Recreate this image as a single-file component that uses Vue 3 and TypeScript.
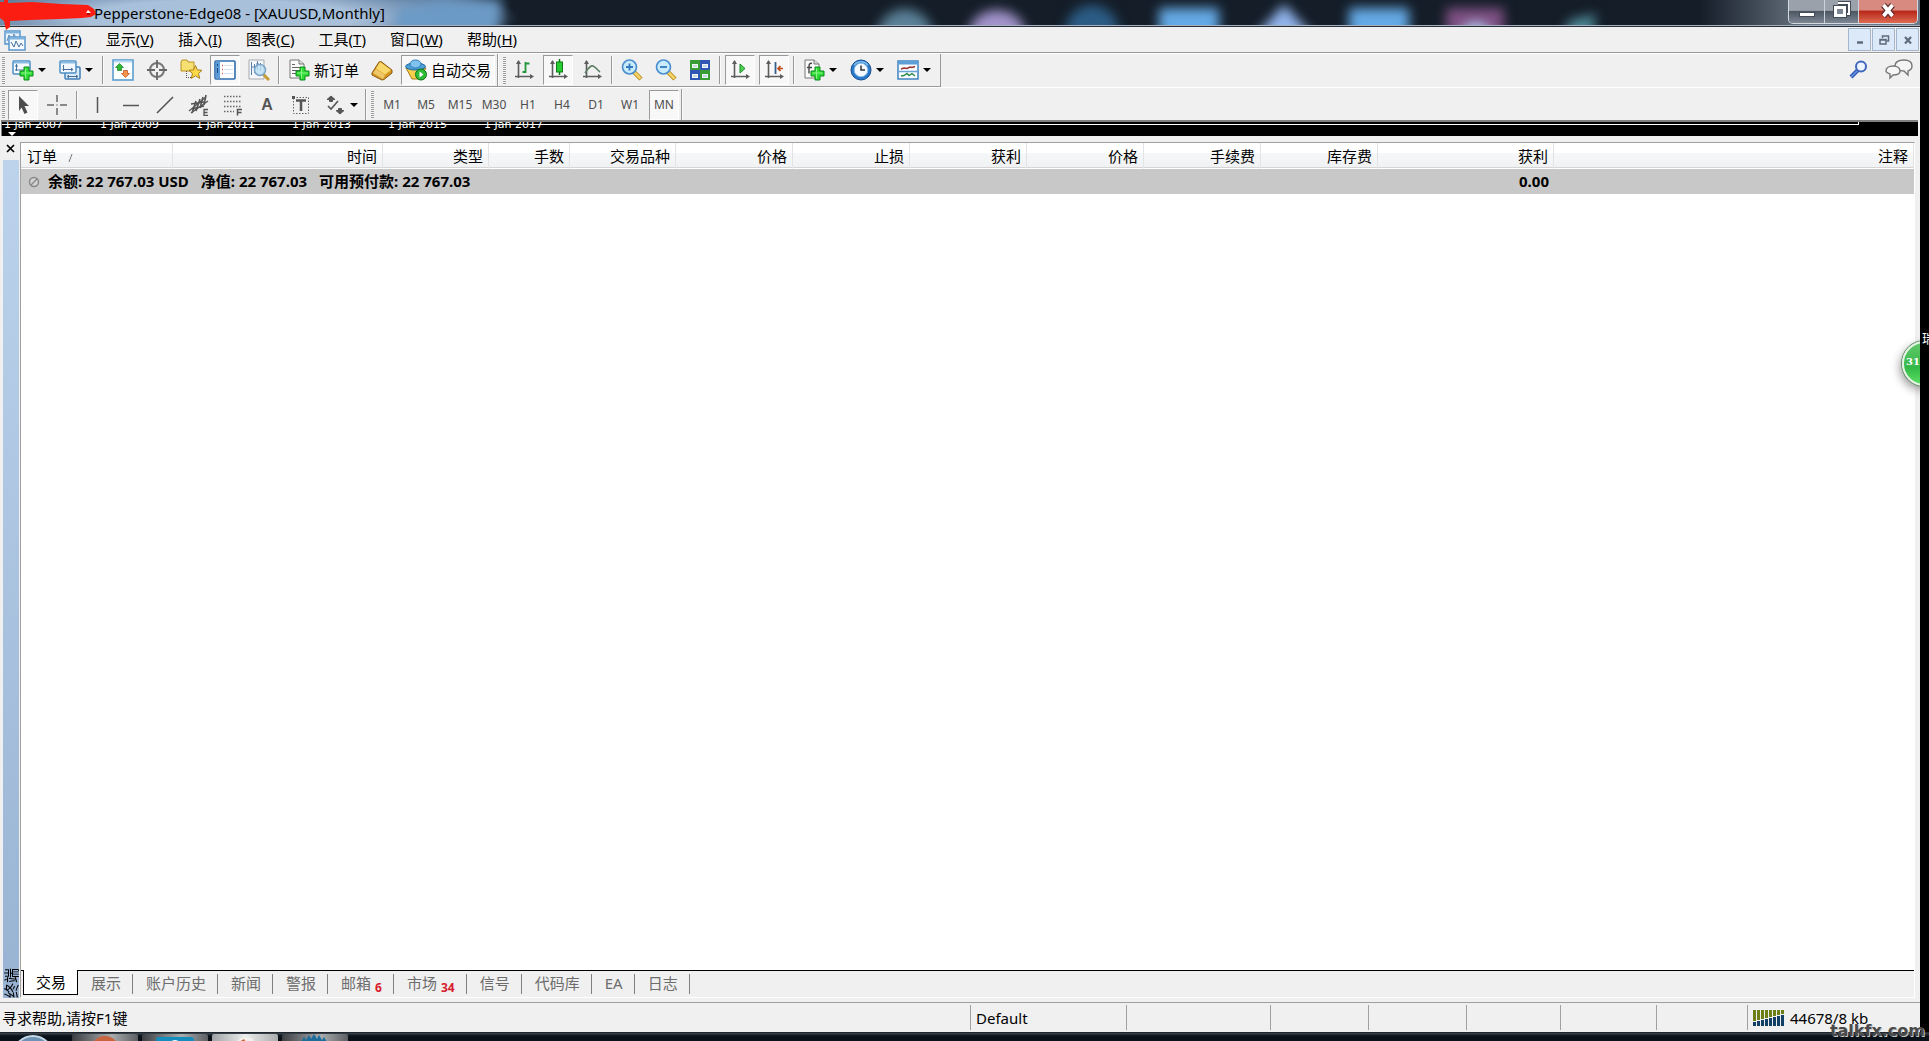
<script setup lang="ts">
interface Tool {
  id: string
  label: string
  text?: string
  drop?: boolean
  pressed?: boolean
  sep?: boolean
}

const plus =
  '<path d="M12 8h5v4h4v5h-4v4h-5v-4H8v-5h4z" fill="#2fdc35" stroke="#0b8a1b"/><path d="M13.500 9.500v10M9.500 14h10" stroke="#8cf58a" stroke-width="1"/>'
const axes =
  '<path d="M5.500 2v17M2 17.500h17" stroke="#5d5d5d" stroke-width="1.600" fill="none"/><path d="M3 5l2.500-4L8 5zM17 15l4 2.500-4 2.500z" fill="#5d5d5d"/>'
const magnifier =
  '<path d="M13 13l7 7" stroke="#b98a1c" stroke-width="4.500"/><path d="M13.500 13.500l6 6" stroke="#f6d568" stroke-width="2.500"/><circle cx="8.500" cy="8" r="7" fill="#c9ecfb" stroke="#4c8fd0" stroke-width="1.700"/>'

const icons: Record<string, string> = {
  newChart:
    '<rect x="1" y="2" width="17" height="13" rx="1" fill="#f4faff" stroke="#4d8fc4" stroke-width="1.500"/><path d="M2 3.500h15" stroke="#8bbce4" stroke-width="2"/><path d="M4.500 5v7M3 7h3M3 11h9" stroke="#476f96" fill="none"/>' + plus,
  profiles:
    '<rect x="6" y="8" width="15" height="12" rx="1" fill="#dcecfa" stroke="#3f7fb8" stroke-width="1.500"/><path d="M9 17.500h9M10 16l-2 1.500 2 1.500M17 16l2 1.500-2 1.500" stroke="#476f96" fill="none"/><rect x="1" y="2" width="16" height="12" rx="1" fill="#f2f8fe" stroke="#4d8fc4" stroke-width="1.500"/><path d="M2 3.500h14" stroke="#8bbce4" stroke-width="2"/><path d="M4.500 6v6M3.500 10.500h10M12 9l2 1.500-2 1.500" stroke="#476f96" fill="none"/>',
  market:
    '<rect x="1" y="1" width="20" height="20" fill="#fbfdff" stroke="#5c9ed0" stroke-width="1.600"/><path d="M2 2.500h18" stroke="#b8daf2" stroke-width="2"/><path d="M7.500 4.500l4 4H9.500v3h-4v-3h-2z" fill="#31b733" stroke="#12801c" stroke-width=".7"/><path d="M13.500 18.500l-4-4h2v-3h4v3h2z" fill="#f4934a" stroke="#bf4a16" stroke-width=".7"/>',
  navigator:
    '<circle cx="11" cy="11" r="7" fill="none" stroke="#777" stroke-width="2"/><path d="M11 1v8M11 13v8M1 11h8M13 11h8" stroke="#666" stroke-width="1.800"/>',
  favorites:
    '<path d="M1 3l1-2h5l1 2h6v9H1z" fill="#f7e072" stroke="#bb9220"/><path d="M6.500 12v8M8 18.500h4" stroke="#555" stroke-dasharray="1 1"/><path d="M15.500 6.500l1.900 4.400 4.600.4-3.500 3.200 1.200 4.900-4.200-2.600-4.200 2.600 1.200-4.900L9 11.300l4.600-.4z" fill="#fbd94b" stroke="#a9801b"/>',
  terminal:
    '<rect x="1" y="2" width="20" height="18" rx="1" fill="#fff" stroke="#2d6eb0" stroke-width="1.600"/><rect x="2" y="3" width="4" height="16" fill="#5b9bd8"/><path d="M3.500 5v2M3.500 9v5" stroke="#16487e"/><path d="M8 6.500h1M8 10.500h1M8 14.500h1" stroke="#d05b50" stroke-width="1.500"/><path d="M10 6.500h9M10 10.500h9M10 14.500h9" stroke="#d5e4f3"/>',
  tester:
    '<path d="M1 1h15v19H1z" fill="#f5f7fa" stroke="#a5a9b0"/><path d="M3.500 3v13M6.500 5v9M9.500 2v9M12.500 4v8M3 8h3M8 5h3" stroke="#5b80aa"/><path d="M15 15l6 6" stroke="#c79c33" stroke-width="3"/><circle cx="12" cy="11" r="5.500" fill="#b9def5" fill-opacity=".8" stroke="#7ba3c8" stroke-width="1.500"/>',
  order:
    '<path d="M2 1h9l5 4v14H2z" fill="#fbfbfb" stroke="#777"/><path d="M11 1v4h5" fill="#ddd" stroke="#777"/><path d="M4 5.500h3M4 8.500h8M4 11.500h8M4 14.500h5" stroke="#666"/>' + plus,
  gold:
    '<path d="M1 14L8 3l2-.5L21 11v3l-8 6.500-2 .5L1 16z" fill="#d7981f" stroke="#8b5a12"/><path d="M5 9.500L9 3l11 8-6 4.500z" fill="#f8d86b"/><path d="M2 14l3-4 9 6-2 4z" fill="#fbe79d" opacity=".6"/>',
  auto:
    '<path d="M1 9l6 11h7l7-11z" fill="#f5cf4c" stroke="#a57b17"/><ellipse cx="10.500" cy="7.500" rx="10" ry="3.500" fill="#4d9fd8" stroke="#22699f"/><ellipse cx="10.500" cy="5" rx="5.500" ry="4" fill="#7fc3ee" stroke="#2c78b0"/><circle cx="16" cy="15.500" r="5.500" fill="#2fbd36" stroke="#0d7419"/><path d="M14.500 12.500l4 3-4 3z" fill="#fff"/>',
  bars: axes + '<path d="M12.500 3v11M12.500 4.500h4M9.500 13h3" stroke="#21963a" stroke-width="1.800" fill="none"/>',
  candles: axes + '<path d="M12.500 0v16" stroke="#0b7a16" stroke-width="1.500"/><rect x="9.500" y="3" width="6" height="10" fill="#27cc31" stroke="#0b7a16"/>',
  line: axes + '<path d="M4 14c3-4 5-8 8-7s4 4 7 6" stroke="#5b7d60" stroke-width="1.600" fill="none"/>',
  zoomIn: magnifier + '<path d="M5 8h7M8.500 4.500v7" stroke="#3579bd" stroke-width="1.800"/>',
  zoomOut: magnifier + '<path d="M5 8h7" stroke="#3579bd" stroke-width="1.800"/>',
  tile:
    '<path d="M1 1h10v10H1zM11 11h10v10H11z" fill="#3a9c34"/><path d="M11 1h10v10H11zM1 11h10v10H1z" fill="#2f55b5"/><path d="M3 5h6v4H3zM3 15h6v4H3z" fill="#eef8ee"/><path d="M13 5h6v4h-6zM13 15h6v4h-6z" fill="#eaf2fc"/><path d="M4 7h4M14 7h4M4 17h4M14 17h4" stroke="#9fc0c8"/>',
  scroll: axes + '<path d="M11 5l5 4.500-5 4.500z" fill="#50d14e" stroke="#168b27"/>',
  shift: axes + '<path d="M12.500 3v12" stroke="#35608c" stroke-width="1.800"/><path d="M20 9.500h-5M17.500 7l-2.500 2.500 2.500 2.500" stroke="#c04a18" stroke-width="1.700" fill="none"/>',
  indicators:
    '<path d="M2 1h9l5 4v14H2z" fill="#fbfbfb" stroke="#777"/><path d="M11 1v4h5" fill="#ddd" stroke="#777"/><path d="M9 4.500c-3-1-3 2-3 4v6M4 8.500h5" stroke="#444" stroke-width="1.400" fill="none"/>' + plus,
  clock:
    '<circle cx="11" cy="11" r="10" fill="#2a78c9" stroke="#164f94"/><circle cx="11" cy="11" r="6.800" fill="#f3f9ff" stroke="#86bbea"/><path d="M11 6.500V11h4" stroke="#333" stroke-width="1.500" fill="none"/><path d="M4 6a9 9 0 0 1 14 0" stroke="#7dbcf0" stroke-width="1.500" fill="none"/>',
  template:
    '<rect x="1" y="2" width="20" height="18" fill="#f8fcff" stroke="#3f83c0" stroke-width="1.500"/><path d="M1.500 4h19" stroke="#5d9ed6" stroke-width="3"/><path d="M1 12.500h20" stroke="#6ba4d4" stroke-width="1.500"/><path d="M4 10l3-1 3 .5L13 8l2 .5 3-1" stroke="#9c3030" stroke-width="1.400" fill="none"/><path d="M4 17l3-.5 3-2 2 2 3-2 3 2.500" stroke="#2f8a46" stroke-width="1.400" fill="none"/>',
  cursor: '<path d="M7 2l10 10h-4.500l3 6.500-3 1.500-3-6.500L7 17z" fill="#4d4d4d"/>',
  cross: '<path d="M11 1v7M11 14v7M1 11h7M14 11h7M10.500 11h1" stroke="#666" stroke-width="1.500"/>',
  vline: '<path d="M11.500 3v16" stroke="#555" stroke-width="1.500"/>',
  hline: '<path d="M3 11.500h16" stroke="#555" stroke-width="1.500"/>',
  trend: '<path d="M3 19L19 3" stroke="#555" stroke-width="1.600"/>',
  channel:
    '<path d="M1 17L18 3M3 19L20 7M3 10l13-2M4 15l12-3" stroke="#555" stroke-width="1.300"/><path d="M4 19L8 7M8 17l4-12M12 14l3-11M16 11l2-10" stroke="#555" stroke-width="1.600"/><path d="M20 15.500h-4v6h4M16 18.500h3.500" stroke="#555" stroke-width="1.300" fill="none"/>',
  fibo:
    '<path d="M2 2.500h18M2 7.500h18M2 12.500h18M2 17.500h10" stroke="#666" stroke-width="1.400" stroke-dasharray="1.500 1.500"/><path d="M20 15.500h-4.500v6M15.500 18.500h4" stroke="#555" stroke-width="1.500" fill="none"/>',
  label:
    '<rect x="3.500" y="3.500" width="15" height="16" fill="none" stroke="#666" stroke-dasharray="1.500 1.500"/><path d="M6 6.500h10M11 6.500V17" stroke="#555" stroke-width="2.500"/><path d="M2 2h3v3H2z" fill="#555"/>',
  shapes:
    '<path d="M7 2l4 3.500H8.500v2h-3v-2H3zM16 20l-4-3.500h2.500v-2h3v2H20z" fill="#555" stroke="#555"/><path d="M4 12l3 3 7-8" stroke="#555" stroke-width="1.600" fill="none"/>',
}

const standard: Tool[] = [
  { id: 'newChart', label: '新图表', drop: true },
  { id: 'profiles', label: '配置文件', drop: true, sep: true },
  { id: 'market', label: '市场报价' },
  { id: 'navigator', label: '数据窗口' },
  { id: 'favorites', label: '导航' },
  { id: 'terminal', label: '终端', pressed: true },
  { id: 'tester', label: '策略测试', sep: true },
  { id: 'order', label: '新订单', text: '新订单' },
  { id: 'gold', label: '编辑器' },
  { id: 'auto', label: '自动交易', text: '自动交易', pressed: true },
]
const charts: Tool[] = [
  { id: 'bars', label: '柱状图' },
  { id: 'candles', label: '阴阳烛', pressed: true },
  { id: 'line', label: '折线图', sep: true },
  { id: 'zoomIn', label: '放大' },
  { id: 'zoomOut', label: '缩小' },
  { id: 'tile', label: '平铺', sep: true },
  { id: 'scroll', label: '自动滚动', pressed: true },
  { id: 'shift', label: '图表平移', pressed: true, sep: true },
  { id: 'indicators', label: '指标', drop: true },
  { id: 'clock', label: '周期', drop: true },
  { id: 'template', label: '模板', drop: true },
]
const drawing: Tool[] = [
  { id: 'cursor', label: '光标', pressed: true },
  { id: 'cross', label: '十字准线', sep: true },
  { id: 'vline', label: '垂直线' },
  { id: 'hline', label: '水平线' },
  { id: 'trend', label: '趋势线' },
  { id: 'channel', label: '通道' },
  { id: 'fibo', label: '斐波那契' },
  { id: 'letter', label: '文字' },
  { id: 'label', label: '文字标签' },
  { id: 'shapes', label: '箭头', drop: true },
]
const bands = [
  [standard, charts],
  [drawing],
]
const frames = ['M1', 'M5', 'M15', 'M30', 'H1', 'H4', 'D1', 'W1', 'MN']

const menus = [
  ['文件', 'F'], ['显示', 'V'], ['插入', 'I'], ['图表', 'C'],
  ['工具', 'T'], ['窗口', 'W'], ['帮助', 'H'],
]
const dates = [2007, 2009, 2011, 2013, 2015, 2017].map((y) => `1 Jan ${y}`)

const columns: { name: string; width?: number }[] = [
  { name: '订单', width: 152 }, { name: '时间', width: 210 }, { name: '类型', width: 106 },
  { name: '手数', width: 81 }, { name: '交易品种', width: 106 }, { name: '价格', width: 117 },
  { name: '止损', width: 117 }, { name: '获利', width: 117 }, { name: '价格', width: 117 },
  { name: '手续费', width: 117 }, { name: '库存费', width: 117 }, { name: '获利', width: 176 },
  { name: '注释' },
]
const account = ['余额: 22 767.03 USD', '净值: 22 767.03', '可用预付款: 22 767.03']
const tabs: { name: string; count?: number; active?: boolean }[] = [
  { name: '交易', active: true }, { name: '展示' }, { name: '账户历史' }, { name: '新闻' },
  { name: '警报' }, { name: '邮箱', count: 6 }, { name: '市场', count: 34 }, { name: '信号' },
  { name: '代码库' }, { name: 'EA' }, { name: '日志' },
]
const cells = [144, 98, 98, 94, 96, 91]
</script>

<template>
  <div class="desktop">
    <div class="upper">
      <main class="window">
        <header class="titlebar">
          <div class="glass" aria-hidden="true">
            <svg width="1700" height="50" viewBox="0 0 1700 50">
              <path d="M395 44V8l30-4 22-8h54v24l-10 24z" fill="#6c9ac6" />
              <circle cx="905" cy="37" r="28" fill="#5b8298" />
              <ellipse cx="997" cy="34" rx="28" ry="24" fill="#a394cc" />
              <circle cx="1092" cy="32" r="27" fill="#2c5c85" />
              <rect x="1159" y="8" width="60" height="40" fill="#65aae6" />
              <path d="M1248 44l36-40 36 40z" fill="#92b5ee" />
              <rect x="1349" y="8" width="60" height="40" fill="#65aae6" />
              <rect x="1446" y="8" width="58" height="40" fill="#7e5082" />
              <circle cx="1476" cy="38" r="16" fill="#b0c6ee" />
              <path d="M1560 40l10-20 26-6-4 26z" fill="#4f8a98" />
            </svg>
          </div>
          <svg class="scribble" width="98" height="30" viewBox="0 0 98 30" aria-hidden="true">
            <path d="M0 2h4V0h4v3l24-1 30 2 26 1 6 4 2 5-5 3-9 1-22 1-30 1-20 1v6l-4 3-2-9-4-3z" fill="#fb1d12" />
            <path d="M86 13l2-3 3 3z" fill="#fff" /><path d="M87 14h3" stroke="#600" />
          </svg>
          <h1>Pepperstone-Edge08 - [XAUUSD,Monthly]</h1>
          <div class="caption-buttons">
            <button type="button" class="min" aria-label="最小化">
              <svg width="18" height="20" viewBox="0 0 18 20"><rect x="1.500" y="12.500" width="15" height="4" fill="#fff" stroke="#444c58" /></svg>
            </button>
            <button type="button" class="restore" aria-label="还原">
              <svg width="20" height="20" viewBox="0 0 20 20">
                <path d="M6 3h11v11h-3" fill="none" stroke="#444c58" stroke-width="4" /><path d="M6 3h11v11h-3" fill="none" stroke="#fff" stroke-width="2" />
                <rect x="3.500" y="7.500" width="9" height="8" fill="none" stroke="#444c58" stroke-width="5" /><rect x="3.500" y="7.500" width="9" height="8" fill="#7c8591" stroke="#fff" stroke-width="3" />
              </svg>
            </button>
            <button type="button" class="close" aria-label="关闭">
              <svg width="20" height="20" viewBox="0 0 20 20"><path d="M5.500 5l9 11M14.500 5l-9 11" stroke="#5b2a2a" stroke-width="6" /><path d="M5.500 5l9 11M14.500 5l-9 11" stroke="#fff" stroke-width="3.600" /></svg>
            </button>
          </div>
        </header>

        <nav class="menubar">
          <svg class="app-icon" width="22" height="22" viewBox="0 0 22 22" aria-hidden="true">
            <rect x="1" y="2" width="15" height="13" fill="#e8f3fc" stroke="#5796cb" stroke-width="1.500" /><path d="M1 3.500h15" stroke="#7eb2df" stroke-width="2" />
            <path d="M3 12l2-6 3 5 2-6 2 4" stroke="#6c8cab" fill="none" />
            <rect x="5" y="8" width="16" height="13" fill="#f5faff" stroke="#5796cb" stroke-width="1.500" /><path d="M5 9.500h16" stroke="#7eb2df" stroke-width="2" />
            <path d="M7 13l3 5 2-6 3 6 2-4 2 3" stroke="#44709b" fill="none" />
          </svg>
          <button v-for="m in menus" :key="m[1]" type="button" class="menu">{{ m[0] }}(<u>{{ m[1] }}</u>)</button>
          <div class="mdi">
            <button type="button" aria-label="最小化图表"><svg width="12" height="12" viewBox="0 0 12 12"><path d="M3 8.500h6" stroke="#5f6b7a" stroke-width="2.500" /></svg></button>
            <button type="button" aria-label="还原图表"><svg width="12" height="12" viewBox="0 0 12 12"><path d="M4.500 4V2h6v5h-2M4 2h7" stroke="#5f6b7a" stroke-width="1.500" fill="none" /><path d="M2 5.500h6v4.500H2zM2 6h6" stroke="#5f6b7a" stroke-width="1.500" fill="none" /></svg></button>
            <button type="button" aria-label="关闭图表"><svg width="12" height="12" viewBox="0 0 12 12"><path d="M3 3l6 6.500M9 3L3 9.500" stroke="#5f6b7a" stroke-width="2.200" /></svg></button>
          </div>
        </nav>

        <div v-for="(band, b) in bands" :key="b" class="band" :class="{ last: b === 1 }">
          <div class="bar" :class="{ outlined: b === 0 }">
            <template v-for="(group, g) in band" :key="g">
              <span class="grip"></span>
              <template v-for="t in group" :key="t.id">
                <button type="button" class="tool" :class="{ pressed: t.pressed, drop: t.drop, wide: t.text }" :aria-label="t.label">
                  <b v-if="t.id === 'letter'" class="letter">A</b>
                  <svg v-else width="22" height="22" viewBox="0 0 22 22" v-html="icons[t.id]"></svg>
                  <span v-if="t.text">{{ t.text }}</span>
                  <i v-if="t.drop" class="arrow"></i>
                </button>
                <span v-if="t.sep" class="sep"></span>
              </template>
              <span v-if="g < band.length - 1 || b === 1" class="edge"></span>
            </template>
            <template v-if="b === 1">
              <span class="grip"></span>
              <button v-for="f in frames" :key="f" type="button" class="tool frame" :class="{ pressed: f === 'MN' }">{{ f }}</button>
              <span class="edge"></span>
            </template>
          </div>
          <div v-if="b === 0" class="right-tools">
            <button type="button" aria-label="搜索">
              <svg width="20" height="20" viewBox="0 0 20 20"><path d="M9 11l-7 7" stroke="#2c56b4" stroke-width="4" /><path d="M9 11l-7 7" stroke="#6d98e6" stroke-width="1.500" /><circle cx="12" cy="7.500" r="5" fill="#eef5ff" stroke="#4166be" stroke-width="2" /></svg>
            </button>
            <button type="button" aria-label="聊天">
              <svg width="28" height="22" viewBox="0 0 28 22"><path d="M19 2c5 0 8 2 8 6 0 3-1 4-4 5v4l-4-4c-5 0-9-1-9-5s4-6 9-6z" fill="#f4f4f4" stroke="#777" stroke-width="1.400" /><path d="M8 8c4 0 7 2 7 5s-3 4-7 4l-3 3v-4c-3-1-4-2-4-3 0-3 3-5 7-5z" fill="#f7f7f7" stroke="#777" stroke-width="1.400" /></svg>
            </button>
          </div>
        </div>

        <section class="chart" aria-label="图表">
          <div class="axis"></div>
          <div class="dates"><span v-for="d in dates" :key="d">{{ d }}</span></div>
          <i class="marker"></i>
        </section>

        <section class="terminal">
          <aside class="side">
            <button type="button" class="side-close" aria-label="关闭终端"><svg width="9" height="9" viewBox="0 0 9 9"><path d="M1 1l7 7M8 1L1 8" stroke="#000" stroke-width="1.700" /></svg></button>
            <div class="side-title"><span>终端</span></div>
          </aside>
          <div class="panel">
            <div class="list">
              <table>
                <colgroup><col v-for="(c, i) in columns" :key="i" :style="c.width ? { width: c.width + 'px' } : undefined" /></colgroup>
                <thead>
                  <tr><th v-for="(c, i) in columns" :key="i" scope="col">{{ c.name }}<svg v-if="i === 0" class="sort" width="6" height="8" viewBox="0 0 6 8" aria-hidden="true"><path d="M1 8L4 0" stroke="#777" /></svg></th></tr>
                </thead>
                <tbody>
                  <tr>
                    <td colspan="11" class="balance"><svg width="12" height="12" viewBox="0 0 12 12" aria-hidden="true"><circle cx="6" cy="6" r="4.500" fill="#d2d2d2" stroke="#888" stroke-width="1.500" /><path d="M3 9l6-6" stroke="#888" stroke-width="1.300" /></svg><span v-for="a in account" :key="a">{{ a }}</span></td>
                    <td>0.00</td>
                    <td></td>
                  </tr>
                </tbody>
              </table>
            </div>
            <div class="tabs" role="tablist">
              <button v-for="t in tabs" :key="t.name" type="button" role="tab" :aria-selected="!!t.active" :class="{ active: t.active }">{{ t.name }}<sub v-if="t.count">{{ t.count }}</sub></button>
            </div>
          </div>
        </section>

        <footer class="status">
          <span class="help">寻求帮助,请按F1键</span>
          <span class="cell profile">Default</span>
          <span v-for="(w, i) in cells" :key="i" class="cell" :style="{ width: w + 'px' }"></span>
          <span class="cell traffic">
            <svg width="32" height="16" viewBox="0 0 32 16" aria-hidden="true">
              <g v-for="n in 8" :key="n">
                <rect :x="(n - 1) * 4" y="0" width="3" :height="12 - n" fill="#6b7f14" />
                <rect :x="(n - 1) * 4" :y="13 - n" width="3" :height="3 + n" fill="#123f66" />
              </g>
            </svg>
            44678/8 kb
          </span>
        </footer>

        <div class="badge"><span>31</span></div>
      </main>
      <div class="strip">瑞</div>
    </div>

    <div class="taskbar">
      <svg width="360" height="9" viewBox="0 0 360 9" aria-hidden="true">
        <defs>
          <linearGradient id="task" x1="0" x2="1"><stop offset="0" stop-color="#3b3f43" /><stop offset=".6" stop-color="#a9acae" /><stop offset="1" stop-color="#5b5f63" /></linearGradient>
          <linearGradient id="lit" x1="0" x2="1"><stop offset="0" stop-color="#9fa3a5" /><stop offset=".5" stop-color="#eceded" /><stop offset="1" stop-color="#a9acad" /></linearGradient>
        </defs>
        <circle cx="33" cy="23" r="20" fill="#6f93b3" stroke="#c7d8e6" stroke-width="2" />
        <rect x="72" y="1" width="66" height="12" rx="2" fill="url(#task)" /><rect x="142" y="1" width="66" height="12" rx="2" fill="url(#task)" />
        <rect x="212" y="1" width="66" height="12" rx="2" fill="url(#lit)" /><rect x="282" y="1" width="66" height="12" rx="2" fill="url(#task)" />
        <circle cx="105" cy="17" r="14" fill="#c9653f" /><circle cx="109" cy="15" r="7" fill="#a3482c" />
        <rect x="156" y="4" width="38" height="10" rx="3" fill="#158dbd" /><circle cx="175" cy="13" r="6" fill="#e8f6fb" />
        <circle cx="246" cy="15" r="11" fill="#f4f1ec" /><path d="M239 9l5-3 2 3z" fill="#c9683c" />
        <path d="M301 9l3-5 2 3 3-5 2 4 3-5 3 5 2-4 3 5 2-3 3 5z" fill="#1d6d9c" />
      </svg>
    </div>
    <div class="watermark">talkfx.com</div>
  </div>
</template>

<style>
body {
  margin: 0;
  background: #000;
}
</style>

<style scoped>
.desktop {
  position: relative;
  display: flex;
  flex-direction: column;
  min-height: 100vh;
  overflow: hidden;
  background: #000;
  color: #000;
  font: 15px/20px "Noto Sans", "Noto Sans CJK SC", sans-serif;
}
.desktop * {
  box-sizing: border-box;
}
button {
  padding: 0;
  border: 0;
  background: none;
  color: inherit;
  font: inherit;
}
svg {
  display: block;
  flex: none;
}
.upper {
  flex: 1;
  display: flex;
}
.window {
  position: relative;
  flex: 1;
  min-width: 0;
  display: flex;
  flex-direction: column;
  overflow: hidden;
  background: #f0f0f0;
}
.strip {
  width: 9px;
  padding: 328px 0 0 2px;
  overflow: hidden;
  white-space: nowrap;
  background: #000;
  color: #fff;
  font-size: 13px;
}

/* title bar: translucent glass with desktop icons glowing through */
.titlebar {
  position: relative;
  display: flex;
  align-items: flex-start;
  height: 27px;
  border-bottom: 1px solid #27303c;
  box-shadow: inset 0 -1px #a7b1bd;
  background:
    linear-gradient(90deg, transparent calc(100% - 220px), #6b7684 calc(100% - 110px)),
    radial-gradient(ellipse 300px 40px at 220px 18px, #a9c0da 0 45%, #6d8bac 75%, transparent),
    linear-gradient(90deg, #4b6177 0, #53708f 450px, #141d28 510px);
}
.glass {
  position: absolute;
  top: 0;
  left: 0;
  right: 0;
  height: 25px;
  overflow: hidden;
}
.glass svg {
  filter: blur(6px);
}
.scribble {
  position: relative;
  margin-right: -4px;
}
h1 {
  position: relative;
  flex: 1;
  margin: 3px 0 0;
  font-size: 15px;
  font-weight: 400;
  line-height: 20px;
  white-space: nowrap;
}
.caption-buttons {
  position: relative;
  display: flex;
  height: 24px;
  margin-right: 2px;
  border: 1px solid #d4d9e0;
  border-top: 0;
  border-radius: 0 0 5px 5px;
  overflow: hidden;
}
.caption-buttons button {
  display: flex;
  justify-content: center;
  width: 34px;
  border-right: 1px solid #ccd2da;
  background: linear-gradient(#9aa1ab 0 45%, #4d5663 50%, #7d8793);
}
.caption-buttons .min {
  width: 36px;
}
.caption-buttons .close {
  width: 58px;
  border-right: 0;
  background: linear-gradient(#d88a80 0 42%, #b8291a 50%, #de6a52);
}

/* menu */
.menubar {
  display: flex;
  align-items: center;
  height: 26px;
  padding-left: 4px;
  border-bottom: 1px solid #999;
}
.app-icon {
  margin-right: 9px;
}
.menu {
  margin-right: 24px;
  padding-bottom: 1px;
  white-space: nowrap;
}
.mdi {
  display: flex;
  gap: 1px;
  margin-left: auto;
  padding-right: 1px;
}
.mdi button {
  display: flex;
  align-items: center;
  justify-content: center;
  width: 23px;
  height: 23px;
  border: 1px solid #a3b6cb;
  background: #dbe9f8;
}

/* toolbars */
.band {
  display: flex;
  align-items: flex-start;
  justify-content: space-between;
  height: 34px;
  border-top: 1px solid #fff;
}
.band.last {
  height: 33px;
}
.bar {
  display: flex;
  align-items: center;
  gap: 4px;
  height: 33px;
  padding: 1px 2px;
}
.bar.outlined {
  padding-right: 4px;
  border-right: 1px solid #999;
  border-bottom: 1px solid #999;
}
.grip {
  width: 3px;
  height: 27px;
  margin-right: -1px;
  background: repeating-linear-gradient(#9a9a9a 0 1px, #f8f8f8 1px 2px);
}
.sep,
.edge {
  width: 2px;
  height: 28px;
  border-left: 1px solid #999;
  border-right: 1px solid #fafafa;
}
.edge {
  height: 32px;
  margin-left: -2px;
}
.tool {
  display: flex;
  align-items: center;
  width: 30px;
  height: 30px;
  padding: 0 3px;
  border: 1px solid transparent;
}
.tool.drop {
  width: 43px;
}
.tool.wide {
  width: auto;
  gap: 4px;
  white-space: nowrap;
}
.tool.pressed {
  border-color: #9a9a9a #fff #fff #9a9a9a;
  background: #f8f8f8;
}
.tool.frame {
  justify-content: center;
  padding: 0;
  color: #4e4e4e;
  font-size: 12px;
}
.letter {
  width: 22px;
  color: #555;
  font: bold 16px/20px "Liberation Sans", sans-serif;
  text-align: center;
}
.arrow {
  margin-left: 4px;
  border: 4px solid transparent;
  border-top-color: #000;
  border-bottom: 0;
}
.right-tools {
  display: flex;
  align-items: center;
  gap: 16px;
  height: 30px;
  padding-right: 7px;
}

/* visible slice of the price chart */
.chart {
  position: relative;
  height: 16px;
  margin: 0 2px 0 1px;
  overflow: hidden;
  border-top: 2px solid #808080;
  border-left: 1px solid #808080;
  background: #000;
}
.axis {
  height: 3px;
  margin-right: 59px;
  border-right: 1px solid #fff;
  border-bottom: 1px solid #fff;
}
.dates {
  position: absolute;
  top: 0;
  left: 2px;
  display: flex;
  color: #fff;
  font: 11px/6px "DejaVu Sans", sans-serif;
}
.dates span {
  width: 96px;
}
.marker {
  position: absolute;
  bottom: 0;
  left: 6px;
  border: 4px solid transparent;
  border-top-color: #fff;
  border-bottom: 0;
}

/* terminal */
.terminal {
  flex: 1;
  display: flex;
  padding: 6px 5px 4px 3px;
}
.side {
  display: flex;
  flex-direction: column;
  width: 17px;
}
.side-close {
  display: flex;
  align-items: center;
  justify-content: center;
  width: 15px;
  height: 13px;
  margin-bottom: 5px;
}
.side-title {
  flex: 1;
  display: flex;
  align-items: flex-end;
  width: 16px;
  background: linear-gradient(#bdd3ec, #98b3d3);
}
.side-title span {
  font-size: 15px;
  line-height: 16px;
  writing-mode: vertical-rl;
  text-orientation: sideways;
  transform: rotate(180deg);
}
.panel {
  flex: 1;
  min-width: 0;
  display: flex;
  flex-direction: column;
  border: 1px solid #a0a0a0;
  border-right-color: #fff;
  border-bottom-color: #fff;
}
.list {
  flex: 1;
  background: #fff;
}
table {
  width: 100%;
  table-layout: fixed;
  border-collapse: separate;
  border-spacing: 0;
}
th {
  height: 26px;
  padding: 0 5px 0 0;
  border-right: 1px solid #e2e3e5;
  border-bottom: 1px solid #fff;
  background: linear-gradient(#fff 0 40%, #f6f7f8 41%, #f1f2f4 95%, #d5d5d5 96%);
  font-weight: 400;
  text-align: right;
  white-space: nowrap;
}
th:first-child {
  padding-left: 6px;
  text-align: left;
}
.sort {
  display: inline-block;
  margin-left: 11px;
}
td {
  height: 25px;
  padding: 0 5px 2px 0;
  background: #c8c8c8;
  font-weight: 700;
  text-align: right;
  white-space: nowrap;
}
td.balance {
  padding-left: 7px;
  text-align: left;
}
.balance svg {
  display: inline-block;
  margin-right: 8px;
  vertical-align: -1px;
}
.balance span {
  margin-right: 12px;
}
.tabs {
  display: flex;
  align-items: flex-start;
  height: 27px;
  padding-left: 2px;
  border-top: 1px solid #000;
}
.tabs button {
  height: 20px;
  margin-top: 3px;
  padding: 0 11px 3px 13px;
  border-right: 1px solid #808080;
  color: #6d6d6d;
  line-height: 16px;
  white-space: nowrap;
}
.tabs .active {
  height: 25px;
  margin-top: -1px;
  padding: 0 11px 0 12px;
  border: 1px solid #000;
  border-top: 0;
  background: #fff;
  color: #000;
}
.tabs sub {
  margin-left: 4px;
  color: #d8202c;
  font-size: 12px;
  font-weight: 700;
  line-height: 0;
  vertical-align: -3px;
}

/* status bar */
.status {
  display: flex;
  align-items: center;
  height: 30px;
  border-top: 1px solid #a0a0a0;
}
.help {
  flex: 1;
  padding-left: 2px;
  white-space: nowrap;
}
.cell {
  display: flex;
  align-items: center;
  height: 25px;
  border-left: 1px solid #a0a0a0;
  white-space: nowrap;
}
.profile {
  width: 156px;
  padding-left: 5px;
}
.traffic {
  width: 173px;
  gap: 5px;
  padding-left: 5px;
}

/* floating badge cut by the window edge */
.badge {
  position: absolute;
  top: 341px;
  right: -27px;
  width: 45px;
  height: 45px;
  padding: 9px 0 0 2px;
  border: 2px solid #e4f2e4;
  border-radius: 50%;
  background: linear-gradient(#62c76a, #33b948 60%, #5ade62);
  box-shadow: 0 0 0 1px #5f8f66, -2px 4px 10px #999;
  color: #fff;
  font: bold 10px/20px "DejaVu Serif", serif;
}

.taskbar {
  height: 9px;
  border-top: 1px solid #20262c;
  background: linear-gradient(#3c4751, #0a1119 3px);
}
.watermark {
  position: absolute;
  right: 4px;
  bottom: 0;
  color: #4a4a4a;
  font: bold 16px/20px "DejaVu Sans", sans-serif;
  text-shadow: 1px 1px #c4c4c4;
}
</style>
